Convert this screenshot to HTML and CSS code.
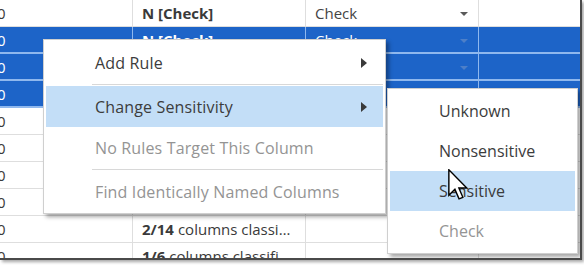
FILE: index.html
```html
<!DOCTYPE html>
<html>
<head>
<meta charset="utf-8">
<link rel="stylesheet" href="styles.css">
</head>
<body>
<div class="frame">
  <div class="grid">
    <div class="row">
      <div class="cell c1"><span class="num">0</span></div>
      <div class="cell c2"><b>N [Check]</b></div>
      <div class="cell c3"><span>Check</span><i class="dd"></i></div>
      <div class="cell c4"></div>
    </div>
    <div class="row sel">
      <div class="cell c1"><span class="num">0</span></div>
      <div class="cell c2"><b>N [Check]</b></div>
      <div class="cell c3"><span>Check</span><i class="dd"></i></div>
      <div class="cell c4"></div>
    </div>
    <div class="row sel">
      <div class="cell c1"><span class="num">0</span></div>
      <div class="cell c2"></div>
      <div class="cell c3"><span></span><i class="dd"></i></div>
      <div class="cell c4"></div>
    </div>
    <div class="row sel">
      <div class="cell c1"><span class="num">0</span></div>
      <div class="cell c2"></div>
      <div class="cell c3"></div>
      <div class="cell c4"></div>
    </div>
    <div class="row">
      <div class="cell c1"><span class="num">0</span></div>
      <div class="cell c2"></div>
      <div class="cell c3"></div>
      <div class="cell c4"></div>
    </div>
    <div class="row">
      <div class="cell c1"><span class="num">0</span></div>
      <div class="cell c2"></div>
      <div class="cell c3"></div>
      <div class="cell c4"></div>
    </div>
    <div class="row">
      <div class="cell c1"><span class="num">0</span></div>
      <div class="cell c2"></div>
      <div class="cell c3"></div>
      <div class="cell c4"></div>
    </div>
    <div class="row">
      <div class="cell c1"><span class="num">0</span></div>
      <div class="cell c2"></div>
      <div class="cell c3"></div>
      <div class="cell c4"></div>
    </div>
    <div class="row">
      <div class="cell c1"><span class="num">0</span></div>
      <div class="cell c2"><b>2/14</b> columns classi…</div>
      <div class="cell c3"></div>
      <div class="cell c4"></div>
    </div>
    <div class="row">
      <div class="cell c1"><span class="num">0</span></div>
      <div class="cell c2"><b>1/6</b> columns classifi</div>
      <div class="cell c3"></div>
      <div class="cell c4"></div>
    </div>
  </div>

  <div class="menu main">
    <div class="item"><span>Add Rule</span><i class="tri"></i></div>
    <div class="sep"></div>
    <div class="item hot"><span>Change Sensitivity</span><i class="tri"></i></div>
    <div class="item off"><span>No Rules Target This Column</span></div>
    <div class="sep"></div>
    <div class="item off"><span>Find Identically Named Columns</span></div>
  </div>

  <div class="menu sub">
    <div class="item"><span>Unknown</span></div>
    <div class="item"><span>Nonsensitive</span></div>
    <div class="item hot"><span>Sensitive</span></div>
    <div class="item off"><span>Check</span></div>
  </div>

  <svg class="cursor" width="20" height="31" viewBox="0 0 12.5 19.5">
    <path d="M0.5 0.5 L0.5 16.5 L4.3 12.8 L6.9 18.8 L9.3 17.8 L6.8 12 L11.8 12 Z" fill="#fff" stroke="#000" stroke-width="0.9" stroke-linejoin="miter"/>
  </svg>
</div>
</body>
</html>
```

FILE: styles.css
```css
html, body {
  margin: 0;
  padding: 0;
  background: #fff;
}
body {
  width: 584px;
  height: 265px;
  overflow: hidden;
  font-family: "Open Sans", "Noto Sans", sans-serif;
}
.frame {
  position: relative;
  width: 580px;
  height: 258px;
  overflow: hidden;
  background: #fff;
  border-right: 2px solid #4a4a4a;
  border-bottom: 2px solid #4a4a4a;
  box-shadow: 2px 2px 3px rgba(0,0,0,0.35);
}
.grid {
  display: flex;
  flex-direction: column;
}
.row {
  display: grid;
  grid-template-columns: 133px 173px 173px 101px;
  flex: 0 0 27px;
  height: 27px;
  box-sizing: border-box;
  border-bottom: 1px solid #dedede;
  color: #3a3a3a;
  font-size: 15px;
}
.cell {
  display: flex;
  align-items: center;
  box-sizing: border-box;
  border-right: 1px solid #dedede;
  white-space: nowrap;
  overflow: hidden;
}
.c1 { padding-left: 0; }
.num { margin-left: -3px; }
.c2 { padding-left: 9px; }
.c2 b { font-weight: 700; margin-right: 4px; }
.c3 { padding-left: 9px; padding-right: 10px; justify-content: space-between; }
.c3 span { color: #444; }
.c4 { border-right: none; }
.dd {
  width: 0; height: 0;
  border-left: 4px solid transparent;
  border-right: 4px solid transparent;
  border-top: 4px solid #5a5a5a;
  margin-top: 2px;
}
.row.sel {
  background: #1d64c8;
  color: #fff;
  border-bottom: 2px solid #8fb8ee;
}
.row.sel .cell { border-right-color: #8fb8ee; }
.row.sel .c3 span { color: #fff; }
.row.sel .dd { border-top-color: #4d7fc8; }

.menu {
  position: absolute;
  background: #fff;
  border: 1px solid #cfcfcf;
  box-shadow: 3px 3px 4px rgba(0,0,0,0.35);
  box-sizing: border-box;
  padding: 2px 2px;
  font-size: 16px;
  color: #3c3c3c;
}
.main {
  left: 43px;
  top: 39px;
  width: 343px;
  height: 175px;
}
.sub {
  left: 387px;
  top: 88px;
  width: 191px;
  height: 166px;
}
.item {
  height: 41px;
  display: flex;
  align-items: center;
  justify-content: space-between;
  white-space: nowrap;
}
.main .item { padding-left: 49px; padding-right: 16px; }
.main .item span { letter-spacing: 0.15px; }
.sub .item { height: 40px; padding-left: 49px; }
.item.hot { background: #c3def7; }
.item.off { color: #949494; }
.sep {
  height: 1px;
  background: #d8d8d8;
  margin: 1px 0 1px 46px;
}
.tri {
  width: 0; height: 0;
  border-top: 5px solid transparent;
  border-bottom: 5px solid transparent;
  border-left: 6px solid #3a3a3a;
}
.cursor {
  position: absolute;
  left: 448px;
  top: 169px;
}
```
